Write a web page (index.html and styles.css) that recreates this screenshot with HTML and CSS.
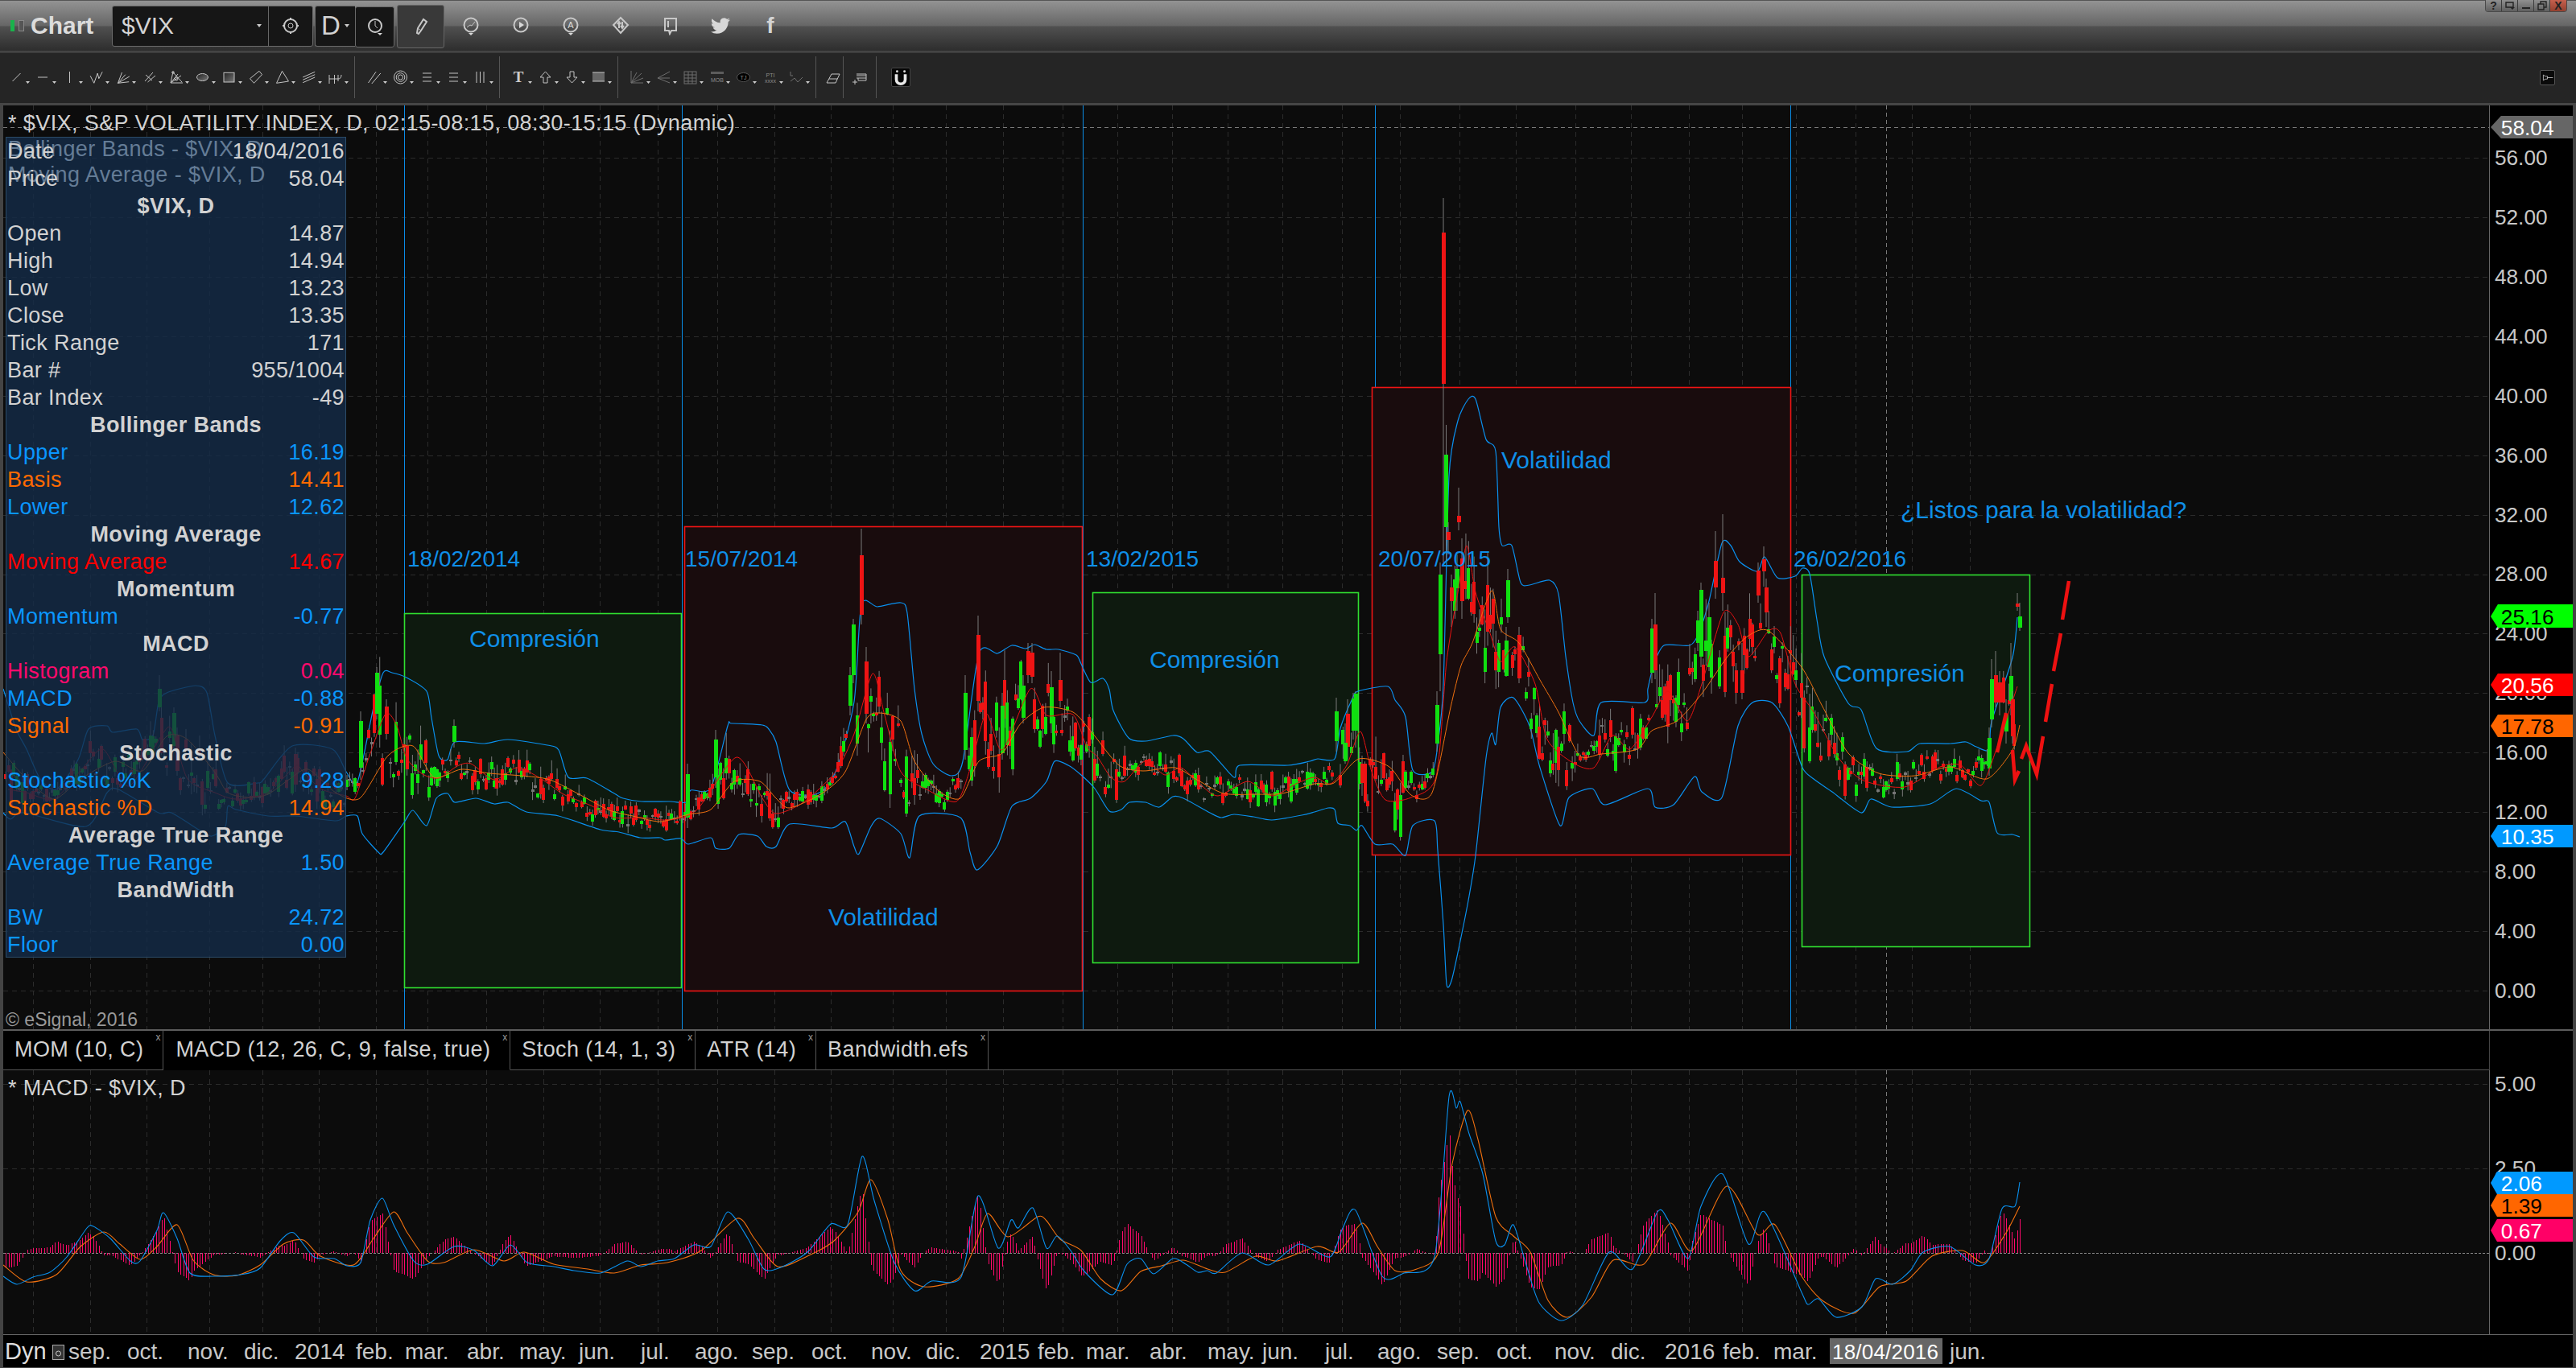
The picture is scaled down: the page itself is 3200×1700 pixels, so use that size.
FILE: index.html
```html
<!DOCTYPE html>
<html lang="es">
<head>
<meta charset="utf-8">
<title>Chart $VIX</title>
<link rel="stylesheet" href="styles.css">
</head>
<body>
<svg class="defs" width="0" height="0">
  <defs>
    <polygon id="arr" points="28,20 33,20 30.5,23"/>
    <linearGradient id="shade" x1="0" y1="0" x2="1" y2="1"><stop offset="0" stop-color="#222"/><stop offset="1" stop-color="#777"/></linearGradient>
  </defs>
</svg>
<div class="win">
  <header class="titlebar">
    <span class="led"><i class="led-on"></i><i class="led-off"></i></span>
    <span class="app">Chart</span>
    <div class="symbol">
      <span class="sym-text">$VIX</span>
      <svg class="mini" viewBox="0 0 6 4"><polygon points="0,0 6,0 3,4"/></svg>
      <span class="sym-gear">
        <svg class="tic" viewBox="0 0 24 24"><circle cx="12" cy="12" r="8" class="ln2"/><circle cx="12" cy="12" r="3" class="ln"/><path d="M12 2v3M12 19v3M2 12h3M19 12h3" class="ln2"/></svg>
      </span>
    </div>
    <div class="dbox"><span>D</span><svg class="mini" viewBox="0 0 6 4"><polygon points="0,0 6,0 3,4"/></svg></div>
    <div class="clock"><svg class="tic" viewBox="0 0 24 24"><circle cx="12" cy="11" r="8" class="ln2"/><path d="M12 5v6l3 3" class="ln"/><polygon points="15,20 21,20 18,23" class="fw"/></svg></div>
    <div class="pencil"><svg class="tic" viewBox="0 0 24 24"><path d="M9 21l-2-1 1-6 7-11 4 3-7 11z" class="ln2"/><path d="M8 14l4 3" class="ln"/></svg></div>
    <span class="ticon"><svg class="tic" viewBox="0 0 24 24"><circle cx="12" cy="11" r="8.5" class="ln2"/><path d="M7 14l4-3 2 1 4-5" class="ln"/><polygon points="9,21 15,21 12,24" class="fw"/></svg></span>
    <span class="ticon"><svg class="tic" viewBox="0 0 24 24"><circle cx="12" cy="11" r="8.5" class="ln2"/><polygon points="10,7 16,11 10,15" class="fw"/></svg></span>
    <span class="ticon"><svg class="tic" viewBox="0 0 24 24"><circle cx="12" cy="11" r="8.5" class="ln2"/><text x="12" y="15" class="t-a">A</text><polygon points="9,21 15,21 12,24" class="fw"/></svg></span>
    <span class="ticon"><svg class="tic" viewBox="0 0 24 24"><polygon points="12,2 21,11 12,21 3,11" class="ln2"/><path d="M10 15V8M8 10l2-3 2 3M14 7v7M12 12l2 3 2-3" class="ln2"/></svg></span>
    <span class="ticon"><svg class="tic" viewBox="0 0 24 24"><path d="M5 3h14v15h-6l-2 4-1-4H5z" class="ln2"/><path d="M9 6v8" class="ln2"/></svg></span>
    <span class="ticon"><svg class="tic" viewBox="0 0 24 24"><path class="fw" d="M23.953 4.57a10 10 0 01-2.825.775 4.958 4.958 0 002.163-2.723c-.951.555-2.005.959-3.127 1.184a4.92 4.92 0 00-8.384 4.482C7.69 8.095 4.067 6.13 1.64 3.162a4.822 4.822 0 00-.666 2.475c0 1.71.87 3.213 2.188 4.096a4.904 4.904 0 01-2.228-.616v.06a4.923 4.923 0 003.946 4.827 4.996 4.996 0 01-2.212.085 4.936 4.936 0 004.604 3.417 9.867 9.867 0 01-6.102 2.105c-.39 0-.779-.023-1.17-.067a13.995 13.995 0 007.557 2.209c9.053 0 13.998-7.496 13.998-13.985 0-.21 0-.42-.015-.63A9.935 9.935 0 0024 4.59z"/></svg></span>
    <span class="ticon t-f">f</span>
    <div class="winbtns">
      <span class="wb">?</span>
      <span class="wb"><svg class="wbi" viewBox="0 0 12 12"><path d="M1 2h9v6H1z" class="ln"/><polygon points="6,8 12,8 9,11" class="fw"/></svg></span>
      <span class="wb"><svg class="wbi" viewBox="0 0 12 12"><rect x="1" y="8" width="10" height="2" class="fw"/></svg></span>
      <span class="wb"><svg class="wbi" viewBox="0 0 12 12"><path d="M1 4h7v7H1zM4 4V1h7v7H8" class="ln"/></svg></span>
      <span class="wb wb-x">X</span>
    </div>
  </header>

  <nav class="toolbar">
    <span class="tb"><svg viewBox="0 0 33 30"><path class="ln" d="M11.5 20L21.5 10"/><use href="#arr"/></svg></span>
    <span class="tb"><svg viewBox="0 0 33 30"><path class="ln" d="M10 15H22"/><use href="#arr"/></svg></span>
    <span class="tb"><svg viewBox="0 0 33 30"><path class="ln" d="M16.5 8V22"/><use href="#arr"/></svg></span>
    <span class="tb"><svg viewBox="0 0 33 30"><path class="ln" d="M9.2 13.3L13.8 22.3L18.2 10L19.8 16.7L24.2 8.3"/><use href="#arr"/></svg></span>
    <span class="tb"><svg viewBox="0 0 33 30"><path class="ln" d="M10.5 22.3L15.5 9M10.5 22.3L19.8 11.7M10.5 22.3L24.8 14M10.5 22.3L24.2 20.7"/><use href="#arr"/></svg></span>
    <span class="tb"><svg viewBox="0 0 33 30"><path class="ln" d="M11 20L21 9M14.5 21L24 13M12 12L20 19"/><use href="#arr"/></svg></span>
    <span class="tb"><svg viewBox="0 0 33 30"><path class="ln" d="M10 22L13 8M10 22L19 11M10 22L23 13M10 22H25M13 9L24 21"/><circle cx="13" cy="9" r="1.3" class="ln"/><circle cx="17" cy="17" r="2" class="ln"/><use href="#arr"/></svg></span>
    <span class="tb"><svg viewBox="0 0 33 30"><ellipse cx="16.5" cy="15" rx="7" ry="4.5" class="ln gfill"/><use href="#arr"/></svg></span>
    <span class="tb"><svg viewBox="0 0 33 30"><rect x="10" y="9.3" width="13" height="11.7" class="ln gfill"/><use href="#arr"/></svg></span>
    <span class="tb"><svg viewBox="0 0 33 30"><polygon class="ln" points="9.5,16.7 21,7.3 24.5,11.7 14.5,22.3"/><use href="#arr"/></svg></span>
    <span class="tb"><svg viewBox="0 0 33 30"><polygon class="ln" points="9.5,22.3 16.5,7.3 24.5,20"/><use href="#arr"/></svg></span>
    <span class="tb"><svg viewBox="0 0 33 30"><path class="ln" d="M9.2 15L24.2 8.3M9.2 18.3L24.2 11.7M9.2 21.7L24.2 15"/><use href="#arr"/></svg></span>
    <span class="tb"><svg viewBox="0 0 33 30"><path class="ln" d="M9 17H20Q24 17 24 12M9 12V23M15.5 12V23M20 12V20"/><use href="#arr"/></svg></span>
    <i class="sep"></i>
    <span class="tb"><svg viewBox="0 0 33 30"><path class="ln" d="M9.5 22L19 8.3M13.8 23L24.8 10"/><use href="#arr"/></svg></span>
    <span class="tb"><svg viewBox="0 0 33 30"><circle cx="16.5" cy="15" r="8" class="ln"/><circle cx="16.5" cy="15" r="5.3" class="ln"/><circle cx="16.5" cy="15" r="3" class="ln"/><use href="#arr"/></svg></span>
    <span class="tb"><svg viewBox="0 0 33 30"><path class="ln" d="M11 10H22M11 15H22M11 20H22"/><use href="#arr"/></svg></span>
    <span class="tb"><svg viewBox="0 0 33 30"><path class="ln" d="M11 10H22M11 15H22M11 20H22"/><use href="#arr"/></svg></span>
    <span class="tb"><svg viewBox="0 0 33 30"><path class="ln" d="M12 8V22M16.5 8V22M21 8V22"/><use href="#arr"/></svg></span>
    <i class="sep"></i>
    <span class="tb"><svg viewBox="0 0 33 30"><text x="16" y="21" class="t-t">T</text><use href="#arr"/></svg></span>
    <span class="tb"><svg viewBox="0 0 33 30"><polygon class="ln" points="16.5,8 23,15 19,15 19,22 14,22 14,15 10,15"/><use href="#arr"/></svg></span>
    <span class="tb"><svg viewBox="0 0 33 30"><polygon class="ln" points="16.5,22 23,15 19,15 19,8 14,8 14,15 10,15"/><use href="#arr"/></svg></span>
    <span class="tb"><svg viewBox="0 0 33 30"><rect x="9" y="9" width="15" height="11" class="fg"/><path class="ln" d="M9 9H24M9 20H24"/><use href="#arr"/></svg></span>
    <i class="sep"></i>
    <span class="tb dim"><svg viewBox="0 0 33 30"><path class="ln" d="M9 7V22H24M9 22L22 10M9 22L24 16M9 22L16 9"/><use href="#arr"/></svg></span>
    <span class="tb dim"><svg viewBox="0 0 33 30"><path class="ln" d="M9 16L24 8M9 16H24M9 16L24 22"/><use href="#arr"/></svg></span>
    <span class="tb dim"><svg viewBox="0 0 33 30"><rect x="9" y="8" width="15" height="15" class="ln"/><path class="ln" d="M9 12H24M9 16H24M9 20H24M14 8V23M19 8V23"/><use href="#arr"/></svg></span>
    <span class="tb dim"><svg viewBox="0 0 33 30"><rect x="9" y="8" width="16" height="3" class="fg"/><text x="17" y="21" class="t-s">MOB</text><use href="#arr"/></svg></span>
    <span class="tb"><svg viewBox="0 0 33 30"><ellipse cx="16.5" cy="15" rx="8" ry="5.5" class="blk"/><text x="16.5" y="18" class="t-s">TJ</text><use href="#arr"/></svg></span>
    <span class="tb dim"><svg viewBox="0 0 33 30"><text x="17" y="15" class="t-s">PTI</text><text x="17" y="22" class="t-s">xxxx</text><use href="#arr"/></svg></span>
    <span class="tb dim"><svg viewBox="0 0 33 30"><path class="ln" d="M9 8V13H12M9 20L14 16L18 21L24 15"/><use href="#arr"/></svg></span>
    <i class="sep"></i>
    <span class="tb tb-s"><svg viewBox="0 0 26 30"><path class="ln" d="M6 22L12 11H22L17 22zM9 17H19"/></svg></span>
    <i class="sep sep-tight"></i>
    <span class="tb tb-s"><svg viewBox="0 0 26 30"><path class="ln" d="M9 11H21V19H11V16M9 13H21M9 16H21"/><path class="ln" d="M4 21H10M7 18V24"/></svg></span>
    <i class="sep"></i>
    <span class="magnet"><svg viewBox="0 0 24 24"><path d="M6 8v7a6 6 0 0012 0V8" class="mg"/><circle cx="7" cy="4" r="1.6" class="fw"/><circle cx="17" cy="4" r="1.6" class="fw"/></svg></span>
    <span class="pin"><svg viewBox="0 0 20 20"><path class="ln" d="M4 6L7 8H10V12H7L4 14zM10 10H18"/></svg></span>
  </nav>

  <section class="pane pane-main">
    <div class="plot">
      <svg class="chart" viewBox="4 132 3088 1148" preserveAspectRatio="none">
        <g id="grid-main"></g>
        <path class="blue-v" d="M502.500 132V1280M847.500 132V1280M1345.500 132V1280M1708.500 132V1280M2224.500 132V1280"/>
        <rect class="box-g" x="502.500" y="763.500" width="344" height="465"/>
        <rect class="box-r" x="850.500" y="655.500" width="494" height="577"/>
        <rect class="box-g" x="1357.500" y="737.500" width="330" height="460"/>
        <rect class="box-r" x="1704.500" y="482.500" width="520" height="581"/>
        <rect class="box-g" x="2238.500" y="715.500" width="283" height="462"/>
        <g id="bands"></g>
        <g id="candles"></g>
        <g id="mas"></g>
        <path class="hand" d="M2481 936L2492 887M2500 933L2503 970L2508 959M2511 944L2517 928L2530 963L2538 916M2541 898L2549 851M2551 835L2560 788M2562 771L2570 723"/>
        <text class="note" x="506" y="705">18/02/2014</text>
        <text class="note" x="851" y="705">15/07/2014</text>
        <text class="note" x="1349" y="705">13/02/2015</text>
        <text class="note" x="1712" y="705">20/07/2015</text>
        <text class="note" x="2228" y="705">26/02/2016</text>
        <text class="note note-l" x="583" y="805">Compresión</text>
        <text class="note note-l" x="1428" y="831">Compresión</text>
        <text class="note note-l" x="2279" y="848">Compresión</text>
        <text class="note note-l" x="1029" y="1151">Volatilidad</text>
        <text class="note note-l" x="1865" y="583">Volatilidad</text>
        <text class="note note-l" x="2361" y="645">¿Listos para la volatilidad?</text>
      </svg>
      <div class="chart-title">* $VIX, S&amp;P VOLATILITY INDEX, D, 02:15-08:15, 08:30-15:15 (Dynamic)</div>
      <div class="legend legend-a">Bollinger Bands - $VIX, D</div>
      <div class="legend legend-b">Moving Average - $VIX, D</div>
      <div class="datapanel">
        <div class="row"><span>Date</span><span>18/04/2016</span></div>
        <div class="row"><span>Price</span><span>58.04</span></div>
        <div class="row hd">$VIX, D</div>
        <div class="row"><span>Open</span><span>14.87</span></div>
        <div class="row"><span>High</span><span>14.94</span></div>
        <div class="row"><span>Low</span><span>13.23</span></div>
        <div class="row"><span>Close</span><span>13.35</span></div>
        <div class="row"><span>Tick Range</span><span>171</span></div>
        <div class="row"><span>Bar #</span><span>955/1004</span></div>
        <div class="row"><span>Bar Index</span><span>-49</span></div>
        <div class="row hd">Bollinger Bands</div>
        <div class="row c-blue"><span>Upper</span><span>16.19</span></div>
        <div class="row c-orange"><span>Basis</span><span>14.41</span></div>
        <div class="row c-blue"><span>Lower</span><span>12.62</span></div>
        <div class="row hd">Moving Average</div>
        <div class="row c-red"><span>Moving Average</span><span>14.67</span></div>
        <div class="row hd">Momentum</div>
        <div class="row c-blue"><span>Momentum</span><span>-0.77</span></div>
        <div class="row hd">MACD</div>
        <div class="row c-pink"><span>Histogram</span><span>0.04</span></div>
        <div class="row c-blue"><span>MACD</span><span>-0.88</span></div>
        <div class="row c-orange"><span>Signal</span><span>-0.91</span></div>
        <div class="row hd">Stochastic</div>
        <div class="row c-blue"><span>Stochastic %K</span><span>9.28</span></div>
        <div class="row c-orange"><span>Stochastic %D</span><span>14.94</span></div>
        <div class="row hd">Average True Range</div>
        <div class="row c-blue"><span>Average True Range</span><span>1.50</span></div>
        <div class="row hd">BandWidth</div>
        <div class="row c-blue"><span>BW</span><span>24.72</span></div>
        <div class="row c-blue"><span>Floor</span><span>0.00</span></div>
      </div>
      <div class="copyright">© eSignal, 2016</div>
    </div>
    <svg class="axis" viewBox="3092 132 104 1148" preserveAspectRatio="none">
      <g class="axis-labels">
        <text x="3098" y="206">56.00</text><text x="3098" y="280">52.00</text><text x="3098" y="354">48.00</text>
        <text x="3098" y="428">44.00</text><text x="3098" y="502">40.00</text><text x="3098" y="576">36.00</text>
        <text x="3098" y="650">32.00</text><text x="3098" y="723">28.00</text><text x="3098" y="797">24.00</text>
        <text x="3098" y="871">20.00</text><text x="3098" y="945">16.00</text><text x="3098" y="1019">12.00</text>
        <text x="3098" y="1093">8.00</text><text x="3098" y="1167">4.00</text><text x="3098" y="1241">0.00</text>
      </g>
      <polygon class="tag-grey" points="3093,159 3106,145 3196,145 3196,173 3106,173"/><text class="tag-w" x="3106" y="169">58.04</text>
      <polygon class="tag-green" points="3093,767 3102,752 3196,752 3196,781 3102,781"/><text class="tag-k" x="3106" y="777">25.16</text>
      <polygon class="tag-red" points="3093,852 3102,838 3196,838 3196,866 3102,866"/><text class="tag-w" x="3106" y="862">20.56</text>
      <polygon class="tag-orange" points="3093,903 3102,889 3196,889 3196,917 3102,917"/><text class="tag-k" x="3106" y="913">17.78</text>
      <polygon class="tag-blue" points="3093,1040 3102,1026 3196,1026 3196,1054 3102,1054"/><text class="tag-w" x="3106" y="1050">10.35</text>
    </svg>
  </section>

  <section class="tabs">
    <div class="tab">MOM (10, C)<i class="tab-x">x</i></div>
    <div class="tab tab-on">MACD (12, 26, C, 9, false, true)<i class="tab-x">x</i></div>
    <div class="tab">Stoch (14, 1, 3)<i class="tab-x">x</i></div>
    <div class="tab">ATR (14)<i class="tab-x">x</i></div>
    <div class="tab">Bandwidth.efs<i class="tab-x">x</i></div>
    <div class="tab-fill"></div>
    <div class="tab-axis"></div>
  </section>

  <section class="pane pane-macd">
    <div class="plot">
      <svg class="chart" viewBox="4 1331 3088 328" preserveAspectRatio="none">
        <g id="grid-macd"></g>
        <g id="hist"></g>
        <g id="macd-lines"></g>
      </svg>
      <div class="macd-title">* MACD - $VIX, D</div>
    </div>
    <svg class="axis" viewBox="3092 1331 104 328" preserveAspectRatio="none">
      <g class="axis-labels">
        <text x="3098" y="1357">5.00</text><text x="3098" y="1462">2.50</text><text x="3098" y="1567">0.00</text>
      </g>
      <polygon class="tag-blue" points="3093,1471 3101,1457 3196,1457 3196,1485 3101,1485"/><text class="tag-w" x="3106" y="1481">2.06</text>
      <polygon class="tag-orange" points="3093,1499 3101,1485 3196,1485 3196,1513 3101,1513"/><text class="tag-k" x="3106" y="1509">1.39</text>
      <polygon class="tag-pink" points="3093,1530 3101,1516 3196,1516 3196,1544 3101,1544"/><text class="tag-w" x="3106" y="1540">0.67</text>
    </svg>
  </section>

  <section class="timeaxis">
    <svg class="timesvg" viewBox="4 1660 3192 36" preserveAspectRatio="none">
      <rect class="tag-grey" x="2273" y="1664" width="140" height="32"/>
      <text class="dyn" x="6" y="1690">Dyn</text>
      <rect class="dyn-box" x="65.500" y="1672.500" width="14" height="18"/>
      <circle class="dyn-dot" cx="72.500" cy="1683" r="3"/>
      <g class="time-labels">
        <text x="85" y="1690">sep.</text><text x="158" y="1690">oct.</text><text x="233" y="1690">nov.</text><text x="303" y="1690">dic.</text>
        <text x="366" y="1690">2014</text><text x="442" y="1690">feb.</text><text x="503" y="1690">mar.</text><text x="580" y="1690">abr.</text>
        <text x="645" y="1690">may.</text><text x="719" y="1690">jun.</text><text x="796" y="1690">jul.</text><text x="863" y="1690">ago.</text>
        <text x="934" y="1690">sep.</text><text x="1008" y="1690">oct.</text><text x="1082" y="1690">nov.</text><text x="1150" y="1690">dic.</text>
        <text x="1217" y="1690">2015</text><text x="1289" y="1690">feb.</text><text x="1349" y="1690">mar.</text><text x="1428" y="1690">abr.</text>
        <text x="1500" y="1690">may.</text><text x="1568" y="1690">jun.</text><text x="1646" y="1690">jul.</text><text x="1711" y="1690">ago.</text>
        <text x="1785" y="1690">sep.</text><text x="1859" y="1690">oct.</text><text x="1931" y="1690">nov.</text><text x="2001" y="1690">dic.</text>
        <text x="2068" y="1690">2016</text><text x="2140" y="1690">feb.</text><text x="2203" y="1690">mar.</text>
        <text class="cross-date" x="2276" y="1690">18/04/2016</text><text x="2422" y="1690">jun.</text>
      </g>
    </svg>
  </section>
</div>
<script src="chart.js"></script>
</body>
</html>
```

FILE: styles.css
```css
* { box-sizing: border-box; }
html, body { margin: 0; padding: 0; }
body { width: 3200px; height: 1700px; overflow: hidden; background: #444; font-family: "Liberation Sans", Arial, sans-serif; color: #d2d2d2; }
.defs { position: absolute; }
.win { display: flex; flex-direction: column; width: 3200px; height: 1700px; }

/* shared icon strokes */
.ln { fill: none; stroke: #c4c4c4; stroke-width: 1; }
.ln2 { fill: none; stroke: #c8c8c8; stroke-width: 2; }
.fw { fill: #d8d8d8; }
.gfill { fill: url(#shade); }
.fg { fill: #666; }
.blk { fill: #000; stroke: #555; }
.mg { fill: none; stroke: #e8e8e8; stroke-width: 4; }

/* title bar */
.titlebar { position: relative; display: flex; align-items: center; height: 63px; flex: none; padding-left: 13px;
  background: linear-gradient(#939393 0, #666 31px, #505050 32px, #2c2c2c 63px); border-top: 1px solid #555; }
.led { display: flex; gap: 5px; }
.led i { display: block; width: 5px; height: 14px; }
.led-on { background: #19b34c; }
.led i.led-off { background: #555; border: 1px solid #888; width: 7px; }
.app { margin-left: 8px; font-size: 30px; font-weight: 700; color: #dcdcdc; width: 101px; }
.symbol { display: flex; align-items: center; width: 250px; height: 51px; background: #161616; border: 1px solid #6a6a6a; border-radius: 3px; padding-left: 11px; }
.sym-text { font-size: 30px; color: #d4d4d4; width: 168px; }
.mini { width: 6px; height: 4px; fill: #ccc; }
.symbol .mini { margin-right: 8px; }
.sym-gear { display: flex; align-items: center; justify-content: center; height: 100%; flex: 1; border-left: 1px solid #666; }
.tic { width: 24px; height: 24px; display: block; }
.dbox { display: flex; align-items: center; gap: 5px; width: 50px; height: 51px; margin-left: 2px; padding-left: 7px; background: #161616; border: 1px solid #6a6a6a; border-right: 0; border-radius: 3px 0 0 3px; font-size: 33px; }
.clock { display: flex; align-items: center; justify-content: center; width: 49px; height: 51px; margin-top: 2px; background: #161616; border: 1px solid #6a6a6a; border-radius: 3px; }
.pencil { display: flex; align-items: center; justify-content: center; width: 59px; height: 54px; margin: 2px 2px 0 3px; background: #393939; border: 1px solid #666; border-radius: 3px; }
.ticon { display: flex; align-items: center; justify-content: center; width: 62px; height: 32px; }
.t-a { font-size: 11px; fill: #ddd; text-anchor: middle; font-family: "Liberation Sans", sans-serif; }
.t-f { font-size: 28px; font-weight: 700; color: #d4d4d4; }
.winbtns { position: absolute; top: -1px; left: 3087px; display: flex; height: 15px; border: 1px solid #4a4a4a; border-top: 0; border-radius: 0 0 4px 4px; overflow: hidden; }
.wb { display: flex; align-items: center; justify-content: center; width: 20px; font-size: 14px; font-weight: 700; color: #222; background: linear-gradient(#8f8f8f, #5f5f5f); border-right: 1px solid #3c3c3c; }
.wbi { width: 12px; height: 12px; }
.wbi .ln { stroke: #222; stroke-width: 1.4; }
.wbi .fw { fill: #222; }
.wb-x { background: linear-gradient(#c6604e, #93402f); border-right: 0; }

/* drawing toolbar */
.toolbar { display: flex; align-items: center; flex: none; height: 66px; margin-top: 2px; padding: 0 0 2px 4px; background: #252525; border-bottom: 3px solid #464646; border-top: 1px solid #3a3a3a; }
.tb { display: block; width: 33px; height: 30px; flex: none; fill: #d0d0d0; }
.tb svg { display: block; width: 33px; height: 30px; }
.tb-s { width: 26px; }
.tb-s svg { width: 26px; }
.dim .ln { stroke: #6e6e6e; }
.dim .fg { fill: #5c5c5c; }
.sep { display: block; width: 1px; height: 52px; margin: 0 7px; background: #555; flex: none; }
.sep-tight { margin-left: 0; }
.t-t { font-family: "Liberation Serif", serif; font-weight: 700; font-size: 19px; fill: #ccc; text-anchor: middle; }
.t-s { font-size: 7px; fill: #8a8a8a; text-anchor: middle; font-family: "Liberation Sans", sans-serif; }
.magnet { display: block; width: 24px; height: 24px; margin-left: 11px; background: #050505; border: 1px solid #444; border-radius: 2px; }
.magnet svg { display: block; width: 22px; height: 22px; }
.pin { display: block; width: 19px; height: 19px; margin-left: auto; margin-right: 26px; background: #0a0a0a; border: 1px solid #555; border-radius: 2px; }
.pin svg { display: block; width: 17px; height: 17px; }

/* panes */
.pane { display: flex; flex: none; margin: 0 4px; }
.pane-main { height: 1148px; }
.pane-macd { height: 328px; }
.plot { position: relative; width: 3088px; height: 100%; background: #0c0c0c; }
.chart { display: block; width: 100%; height: 100%; }
.axis { display: block; width: 104px; height: 100%; background: #000; border-left: 1px solid #666; }
.grid { stroke: #2c2c2c; stroke-width: 1; stroke-dasharray: 6 5; fill: none; }
.grid-zero { stroke: #888; stroke-width: 1; stroke-dasharray: 3 2; fill: none; }
.cross { stroke: #7a7a7a; stroke-width: 1; stroke-dasharray: 5 4; fill: none; }
.blue-v { stroke: #0a8ce6; stroke-width: 1; fill: none; }
.box-g { fill: #0e1a0f; stroke: #30e030; stroke-width: 1.6; }
.box-r { fill: #190c0d; stroke: #f01414; stroke-width: 1.6; }
.band { fill: none; stroke: #0a90ee; stroke-width: 1.2; }
.ma-r { fill: none; stroke: #e81212; stroke-width: 1; }
.ma-o { fill: none; stroke: #f0700f; stroke-width: 1; }
.wick { stroke: #7a7a7a; stroke-width: 1; }
.body-g { fill: #10e010; }
.body-r { fill: #ee1414; }
.body-d { fill: #777; }
.hand { fill: none; stroke: #ee1111; stroke-width: 4.5; }
.note { font-size: 28px; fill: #0f8fe8; font-family: "Liberation Sans", sans-serif; }
.note-l { font-size: 30px; }
.hist { stroke: #ff0a6c; stroke-width: 1; shape-rendering: crispEdges; }
.mc-b { fill: none; stroke: #0a90ee; stroke-width: 1.1; }
.mc-o { fill: none; stroke: #f0700f; stroke-width: 1.1; }

/* overlays on the chart */
.chart-title { position: absolute; left: 6px; top: 7px; font-size: 27px; letter-spacing: 0.4px; line-height: 30px; white-space: nowrap; }
.macd-title { position: absolute; left: 6px; top: 7px; font-size: 27px; letter-spacing: 0.4px; line-height: 30px; }
.legend { position: absolute; left: 6px; font-size: 27px; letter-spacing: 0.4px; line-height: 30px; color: #647c96; white-space: nowrap; z-index: 1; }
.legend-a { top: 39px; }
.legend-b { top: 71px; }
.datapanel { position: absolute; left: 3px; top: 39px; width: 423px; height: 1020px; background: rgba(20, 44, 72, 0.8); border: 1px solid #2b4b68; }
.row { position: relative; z-index: 2; display: flex; justify-content: space-between; align-items: center; height: 34px; padding: 0 1px; font-size: 27px; letter-spacing: 0.4px; line-height: 30px; white-space: nowrap; }
.hd { justify-content: center; font-weight: 700; }
.c-blue { color: #0a96ff; }
.c-orange { color: #ff6a00; }
.c-red { color: #ff0000; }
.c-pink { color: #ff0a6c; }
.copyright { position: absolute; left: 3px; top: 1122px; font-size: 23px; line-height: 28px; color: #999; }

/* axes */
.axis-labels { font-size: 26.5px; fill: #c8c8c8; font-family: "Liberation Sans", sans-serif; }
.tag-w, .tag-k { font-size: 26.5px; font-family: "Liberation Sans", sans-serif; }
.tag-w { fill: #fff; }
.tag-k { fill: #000; }
.tag-grey { fill: #666; }
.tag-green { fill: #00ff00; }
.tag-red { fill: #ff0000; }
.tag-orange { fill: #ff6600; }
.tag-blue { fill: #0099ff; }
.tag-pink { fill: #ff0066; }

/* tabs */
.tabs { display: flex; flex: none; height: 51px; margin: 0 4px; background: #000; border-top: 2px solid #5c5c5c; }
.tab { position: relative; height: 49px; padding: 0 24px 0 14px; line-height: 47px; font-size: 27px; letter-spacing: 0.4px; white-space: nowrap; border-right: 1px solid #555; border-bottom: 1px solid #555; background: #000; }
.tab-on { border-bottom-color: #000; padding-left: 15px; }
.tab-x { position: absolute; top: 2px; right: 3px; font-size: 12px; line-height: 12px; letter-spacing: 0; font-style: normal; color: #999; }
.tab-fill { flex: 1; border-bottom: 1px solid #555; height: 49px; }
.tab-axis { width: 104px; flex: none; border-left: 1px solid #444; }

/* time axis */
.timeaxis { flex: none; height: 41px; margin: 0 4px; background: #000; border-top: 1px solid #666; }
.timesvg { display: block; width: 100%; height: 36px; }
.time-labels { font-size: 28px; fill: #c8c8c8; font-family: "Liberation Sans", sans-serif; }
.cross-date { fill: #fff; font-size: 26px; letter-spacing: 0.2px; }
.dyn { font-size: 29px; fill: #ddd; font-family: "Liberation Sans", sans-serif; }
.dyn-box { fill: #333; stroke: #aaa; }
.dyn-dot { fill: none; stroke: #ccc; }
```

FILE: chart.js
```js
(function () {
  var NS = "http://www.w3.org/2000/svg";
  function el(parent, tag, attrs) {
    var n = document.createElementNS(NS, tag);
    for (var k in attrs) n.setAttribute(k, attrs[k]);
    parent.appendChild(n);
    return n;
  }
  function $(id) { return document.getElementById(id); }
  /* smooth curve through the traced points */
  function curve(a) {
    var d = "M" + a[0][0] + " " + a[0][1];
    for (var i = 0; i < a.length - 1; i++) {
      var p0 = a[Math.max(i - 1, 0)], p1 = a[i], p2 = a[i + 1], p3 = a[Math.min(i + 2, a.length - 1)];
      var c1x = p1[0] + (p2[0] - p0[0]) / 8, c1y = p1[1] + (p2[1] - p0[1]) / 8;
      var c2x = p2[0] - (p3[0] - p1[0]) / 8, c2y = p2[1] - (p3[1] - p1[1]) / 8;
      d += "C" + c1x.toFixed(1) + " " + c1y.toFixed(1) + " " + c2x.toFixed(1) + " " + c2y.toFixed(1) + " " + p2[0] + " " + p2[1];
    }
    return d;
  }
  function at(a, x) {
    if (x <= a[0][0]) return a[0][1];
    for (var i = 1; i < a.length; i++) {
      if (x <= a[i][0]) {
        var t = (x - a[i - 1][0]) / (a[i][0] - a[i - 1][0]);
        return a[i - 1][1] + t * (a[i][1] - a[i - 1][1]);
      }
    }
    return a[a.length - 1][1];
  }

  var upper = [[4,857],[20,907],[33,932],[50,969],[70,982],[97,945],[110,907],[133,903],[140,911],[170,907],[177,920],[190,915],[197,874],[207,862],[243,853],[257,862],[267,915],[283,974],[320,974],[328,969],[363,928],[413,932],[430,960],[444,973],[464,880],[476,837],[487,837],[505,843],[530,860],[536,893],[545,940],[556,945],[565,923],[602,925],[631,920],[680,927],[694,933],[706,967],[729,968],[763,987],[774,993],[797,997],[832,997],[852,998],[858,983],[883,980],[904,903],[909,900],[947,902],[955,907],[964,923],[981,983],[1016,987],[1038,960],[1061,873],[1070,753],[1090,755],[1119,750],[1127,763],[1136,857],[1145,913],[1159,950],[1182,965],[1196,947],[1216,813],[1239,813],[1257,803],[1274,807],[1285,802],[1300,808],[1315,808],[1337,815],[1343,826],[1355,849],[1370,844],[1378,858],[1383,884],[1402,918],[1423,922],[1457,915],[1470,919],[1487,936],[1503,935],[1533,967],[1540,952],[1600,952],[1627,947],[1637,944],[1658,944],[1665,906],[1680,869],[1687,860],[1724,854],[1733,871],[1746,892],[1755,958],[1779,960],[1786,926],[1793,851],[1800,593],[1811,524],[1824,497],[1833,497],[1846,547],[1858,562],[1862,656],[1866,679],[1878,679],[1889,725],[1900,728],[1925,722],[1936,739],[1945,817],[1954,874],[1962,897],[1980,915],[1989,874],[2043,874],[2047,857],[2054,828],[2067,803],[2099,803],[2110,788],[2123,748],[2139,676],[2150,679],[2161,699],[2183,711],[2192,693],[2208,719],[2230,717],[2239,707],[2248,714],[2257,771],[2266,817],[2296,875],[2312,883],[2331,931],[2369,935],[2385,925],[2423,925],[2442,923],[2455,929],[2471,933],[2474,898],[2500,818],[2506,768]];
  var lower = [[4,1011],[13,1019],[30,1011],[107,1028],[133,986],[147,982],[197,1011],[213,1011],[250,1034],[263,1040],[280,1028],[283,1003],[293,1007],[333,1015],[367,1015],[417,1021],[430,1015],[444,1015],[450,1037],[470,1060],[476,1060],[502,1023],[513,1008],[530,1027],[542,993],[556,987],[565,998],[591,993],[614,1000],[631,998],[654,1010],[694,1015],[746,1032],[769,1035],[795,1042],[820,1042],[826,1045],[846,1043],[855,1050],[883,1042],[889,1055],[906,1055],[918,1038],[941,1040],[952,1053],[964,1053],[981,1025],[1033,1030],[1050,1022],[1061,1053],[1067,1062],[1082,1028],[1093,1018],[1119,1037],[1130,1067],[1142,1015],[1193,1017],[1205,1060],[1214,1082],[1239,1052],[1257,1003],[1280,993],[1300,972],[1310,947],[1327,952],[1343,964],[1360,981],[1378,1009],[1393,1007],[1403,998],[1423,998],[1440,1004],[1457,991],[1470,993],[1503,1011],[1517,1017],[1533,1013],[1557,1016],[1580,1020],[1617,1014],[1633,1010],[1650,1005],[1658,1007],[1662,1024],[1677,1027],[1685,1033],[1692,1027],[1708,1050],[1730,1050],[1746,1064],[1755,1027],[1782,1021],[1786,1058],[1793,1150],[1797,1224],[1803,1220],[1812,1180],[1824,1120],[1833,1064],[1846,943],[1853,912],[1858,926],[1864,880],[1880,868],[1900,903],[1913,955],[1938,1027],[1949,992],[1978,981],[1994,1001],[2047,981],[2056,1004],[2079,1001],[2105,966],[2114,985],[2139,992],[2159,903],[2177,874],[2201,874],[2221,903],[2239,955],[2253,969],[2276,985],[2312,1011],[2324,994],[2350,1004],[2398,1000],[2430,981],[2461,996],[2471,998],[2481,1036],[2500,1038],[2509,1041]];
  var red = [[10,982],[33,986],[67,994],[100,959],[128,932],[160,978],[200,916],[213,907],[233,969],[267,986],[293,994],[333,986],[367,953],[377,961],[400,982],[430,990],[441,993],[459,940],[479,888],[493,903],[505,943],[525,963],[545,968],[568,953],[585,950],[614,970],[642,955],[671,968],[700,988],[734,1002],[763,1017],[797,1017],[832,1020],[866,1007],[915,942],[947,993],[964,1012],[998,998],[1038,960],[1061,913],[1084,838],[1099,890],[1119,960],[1153,983],[1188,997],[1205,957],[1225,888],[1245,933],[1280,857],[1300,890],[1333,889],[1350,929],[1363,941],[1380,967],[1397,972],[1422,947],[1447,964],[1467,955],[1490,975],[1513,990],[1550,972],[1580,990],[1610,975],[1633,967],[1653,975],[1673,952],[1690,910],[1704,960],[1721,995],[1753,992],[1784,966],[1797,823],[1811,737],[1822,679],[1833,737],[1851,788],[1864,823],[1882,805],[1907,851],[1922,920],[1954,949],[1980,955],[2003,915],[2025,932],[2052,892],[2072,860],[2096,897],[2114,851],[2141,762],[2159,777],[2172,817],[2197,785],[2212,788],[2230,851],[2253,886],[2284,943],[2315,971],[2366,979],[2410,954],[2436,952],[2461,977],[2481,929],[2506,854]];
  var orange = [[4,936],[33,969],[67,994],[100,969],[143,947],[177,959],[207,916],[233,920],[267,961],[283,986],[310,992],[333,988],[360,969],[383,957],[417,986],[447,993],[482,940],[513,928],[539,967],[573,957],[608,962],[648,965],[683,970],[723,990],[757,1008],[786,1015],[820,1022],[855,1013],[883,1007],[912,972],[944,972],[964,993],[981,1005],[1021,987],[1050,960],[1076,895],[1093,887],[1119,897],[1136,947],[1165,983],[1193,993],[1216,947],[1245,937],[1268,900],[1297,880],[1333,886],[1357,912],[1390,952],[1420,959],[1460,955],[1487,970],[1520,987],[1560,988],[1593,987],[1633,975],[1657,974],[1688,944],[1726,954],[1753,989],[1779,986],[1802,880],[1815,828],[1829,800],[1853,735],[1864,783],[1887,800],[1913,846],[1936,886],[1962,940],[1989,938],[2034,932],[2052,909],[2083,897],[2114,863],[2146,817],[2172,791],[2197,785],[2238,830],[2264,879],[2296,937],[2334,962],[2379,965],[2423,954],[2468,969],[2500,933],[2509,902]];
  var mBlue = [[4,1587],[21,1597],[41,1588],[62,1582],[83,1563],[108,1527],[116,1525],[137,1540],[162,1568],[174,1568],[195,1530],[203,1508],[220,1540],[236,1583],[265,1587],[299,1585],[323,1577],[348,1543],[365,1533],[390,1563],[415,1565],[431,1574],[448,1570],[460,1517],[475,1490],[489,1523],[514,1568],[531,1572],[564,1550],[589,1555],[612,1574],[634,1548],[655,1570],[688,1575],[713,1580],[746,1583],[779,1568],[796,1575],[817,1568],[838,1565],[862,1548],[883,1550],[904,1507],[929,1540],[949,1578],[970,1576],[1003,1557],[1032,1522],[1053,1523],[1071,1438],[1086,1493],[1111,1570],[1136,1605],[1157,1593],[1194,1588],[1215,1487],[1240,1552],[1256,1517],[1265,1527],[1283,1502],[1300,1552],[1313,1537],[1330,1555],[1347,1581],[1382,1610],[1400,1572],[1417,1565],[1433,1584],[1457,1565],[1473,1572],[1488,1582],[1500,1580],[1511,1583],[1543,1558],[1576,1573],[1614,1547],[1652,1563],[1668,1527],[1684,1505],[1717,1587],[1744,1583],[1782,1563],[1800,1364],[1809,1378],[1814,1370],[1825,1410],[1842,1460],[1858,1543],[1869,1548],[1880,1523],[1896,1573],[1912,1620],[1939,1642],[1966,1623],[1999,1557],[2028,1578],[2059,1507],[2072,1517],[2097,1565],[2113,1500],[2140,1460],[2172,1547],[2192,1507],[2238,1607],[2246,1622],[2259,1615],[2281,1638],[2313,1625],[2330,1590],[2351,1597],[2373,1580],[2389,1557],[2422,1550],[2454,1573],[2471,1565],[2487,1503],[2503,1500],[2509,1470]];
  var mOrange = [[4,1573],[33,1594],[70,1585],[100,1550],[129,1532],[149,1547],[174,1566],[195,1550],[220,1523],[240,1567],[265,1585],[294,1586],[323,1573],[352,1547],[377,1542],[398,1562],[439,1573],[464,1540],[489,1507],[506,1533],[531,1568],[551,1570],[589,1554],[626,1568],[651,1557],[688,1572],[730,1578],[763,1583],[796,1573],[829,1570],[871,1555],[916,1515],[937,1540],[966,1575],[1003,1562],[1036,1543],[1066,1507],[1082,1467],[1103,1517],[1119,1580],[1148,1600],[1190,1590],[1211,1550],[1227,1509],[1252,1538],[1289,1513],[1300,1518],[1317,1541],[1343,1555],[1367,1590],[1393,1605],[1417,1581],[1443,1574],[1470,1567],[1500,1578],[1522,1582],[1560,1562],[1587,1568],[1636,1550],[1663,1557],[1692,1521],[1711,1550],[1733,1580],[1760,1578],[1787,1557],[1804,1447],[1823,1381],[1836,1417],[1858,1513],[1880,1537],[1901,1557],[1923,1617],[1947,1638],[1977,1613],[2004,1567],[2042,1572],[2075,1521],[2102,1555],[2145,1475],[2183,1535],[2205,1523],[2238,1587],[2265,1618],[2303,1633],[2335,1600],[2368,1593],[2400,1562],[2438,1555],[2465,1570],[2492,1533],[2509,1500]];

  /* grids */
  var vx = [41,112,182,260,326,396,467,531,604,675,745,817,891,962,1032,1109,1175,1246,1320,1388,1456,1525,1593,1667,1739,1813,1883,1957,2026,2098,2164,2231,2305,2375,2447];
  var gm = $("grid-main"), gd = $("grid-macd");
  vx.forEach(function (x) {
    el(gm, "path", { d: "M" + (x + .5) + " 132V1280", "class": "grid" });
    el(gd, "path", { d: "M" + (x + .5) + " 1331V1659", "class": "grid" });
  });
  for (var p = 0; p <= 56; p += 4) {
    var yy = Math.round(1232 - 18.48 * p) + .5;
    el(gm, "path", { d: "M4 " + yy + "H3092", "class": "grid" });
  }
  el(gm, "path", { d: "M2343.5 132V1280", "class": "cross" });
  el(gm, "path", { d: "M4 159.500H3092", "class": "cross" });
  el(gd, "path", { d: "M4 1348.500H3092", "class": "grid" });
  el(gd, "path", { d: "M4 1453.500H3092", "class": "grid" });
  el(gd, "path", { d: "M4 1558.500H3092", "class": "grid-zero" });
  el(gd, "path", { d: "M2343.5 1331V1659", "class": "cross" });

  /* lines */
  el($("bands"), "path", { d: curve(upper), "class": "band" });
  el($("bands"), "path", { d: curve(lower), "class": "band" });
  el($("mas"), "path", { d: curve(red), "class": "ma-r" });
  el($("mas"), "path", { d: curve(orange), "class": "ma-o" });
  el($("macd-lines"), "path", { d: curve(mOrange), "class": "mc-o" });
  el($("macd-lines"), "path", { d: curve(mBlue), "class": "mc-b" });

  /* candles: [x, kind, top, bottom, wickTop, wickBottom] traced from the chart's big bars */
  var big = [
    [1793,"r",290,478,247,700],[1796.5,"g",566,656,529,700],[1799,"r",662,672,650,690],[1789,"g",715,814,700,860],[1785,"g",877,925,860,935],
    [1812,"r",642,650,607,660],[1816,"r",695,748,670,770],[1810,"g",708,732,690,760],[1803,"r",731,748,715,780],[1873,"g",722,768,708,775],
    [1871,"g",797,841,780,842],[1887,"r",790,844,780,850],[2052,"g",782,837,770,850],[2056,"r",777,834,738,845],[2113,"g",734,817,725,830],
    [2109,"g",772,800,760,810],[2131,"r",698,731,661,745],[2140,"r",719,738,640,760],[2184,"r",710,741,700,750],[2191,"r",696,711,680,730],
    [2194,"r",731,762,720,780],[2123,"g",768,830,750,835],[2164,"r",834,862,800,870],[1070,"r",691,765,658,777],[1060,"g",777,840,770,850],
    [1056,"g",840,878,830,890],[1076,"r",823,888,805,900],[468,"g",837,888,830,895],[448,"g",897,955,885,970],[480,"r",879,913,870,920],
    [1215,"r",790,872,766,885],[1199,"g",862,933,840,945],[889,"g",920,967,908,980],[854,"g",963,1017,950,1030],[564,"g",903,923,895,930],
    [1277,"r",810,840,800,850],[1282,"r",812,842,800,850],[1245,"g",878,937,862,945],[1271,"g",853,893,840,900],[1306,"g",855,900,835,912],
    [1317,"r",846,872,812,880],[1660,"g",885,922,868,935],[1674,"r",888,929,870,945],[1671,"g",924,947,900,950],[1681,"g",869,909,862,920],
    [1684,"g",863,909,860,930],[1692,"r",950,974,940,990],[2474,"g",845,895,820,905],[2479,"r",840,874,810,880],[2498,"g",841,872,800,890],
    [2500,"r",870,916,860,925],[2492,"g",889,910,870,925],[2484,"r",849,874,835,890],[2506,"r",751,755,738,760],[2509,"g",767,781,750,785],
    [2471,"g",918,956,905,965],[198,"g",857,880,840,885],[216,"g",887,928,880,935],[220,"r",915,959,905,965],[367,"r",938,976,930,985]
  ];

  var seed = 20160418;
  function rnd() { seed = (seed * 1664525 + 1013904223) % 4294967296; return seed / 4294967296; }

  var cg = $("candles"), hg = $("hist");
  function drawBar(x, kind, top, bot, wt, wb, w) {
    el(cg, "line", { x1: x, x2: x, y1: wt.toFixed(1), y2: wb.toFixed(1), "class": "wick" });
    var cls = kind === "g" ? "body-g" : kind === "r" ? "body-r" : "body-d";
    var h = Math.max(bot - top, 2);
    el(cg, "rect", { x: Math.round(x - w / 2), y: Math.round(top), width: w, height: Math.round(h), "class": cls });
  }
  for (var i = 0; i <= 1004; i++) {
    var x = 2343 + (i - 955) * 3.39;
    if (x < 6) continue;
    var diff = at(mOrange, x) - at(mBlue, x);
    if (Math.abs(diff) > .5) {
      var hy = 1558 - diff * 1.4;
      var hx = Math.round(x) + .5;
      el(hg, "line", { x1: hx, x2: hx, y1: 1558, y2: hy.toFixed(1), "class": "hist" });
    }
    var near = big.some(function (b) { return Math.abs(b[0] - x) < 2.2; });
    if (near) continue;
    var up = at(upper, x), lo = at(lower, x);
    var bw = lo - up;
    var amp = Math.min(Math.max(bw * 0.15, 9), 36);
    var c = at(red, x + 14) * 0.65 + at(orange, x) * 0.35 + (rnd() - .5) * amp * 2.6;
    c = Math.min(Math.max(c, up + 6), lo - 6);
    var bh = 2 + rnd() * rnd() * amp * 2.4;
    var top = c - bh / 2, bot = c + bh / 2;
    var wt = top - 1 - rnd() * rnd() * amp * 1.8, wb = bot + 1 + rnd() * rnd() * amp;
    var kind = bh < 3 ? "d" : (rnd() < .52 ? "r" : "g");
    drawBar(x, kind, top, bot, wt, wb, 4);
  }
  big.forEach(function (b) { drawBar(b[0], b[1], b[2], b[3], b[4], b[5], 5); });
})();
```
